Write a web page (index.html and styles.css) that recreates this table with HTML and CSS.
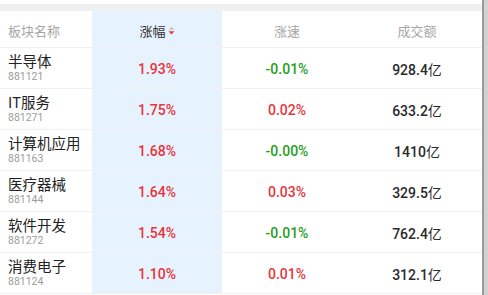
FILE: index.html
```html
<!DOCTYPE html>
<html lang="zh">
<head>
<meta charset="utf-8">
<link rel="stylesheet" href="styles.css">
</head>
<body>
<div class="frame">
  <div class="page">
    <div class="topbar"></div>
    <div class="table">
      <div class="row head">
        <div class="cell name-col"><span class="hd">板块名称</span></div>
        <div class="cell sorted"><span class="hd active">涨幅</span>
          <svg class="sort" width="7" height="9" viewBox="0 0 7 9"><path d="M3.5 0.5 L6.5 3.8 L0.5 3.8 Z" fill="#c8c8c8"/><path d="M0.5 5.2 L6.5 5.2 L3.5 8.5 Z" fill="#e93b3b"/></svg>
        </div>
        <div class="cell"><span class="hd">涨速</span></div>
        <div class="cell"><span class="hd">成交额</span></div>
      </div>
      <div class="row">
        <div class="cell name-col"><div class="nm">半导体</div><div class="code">881121</div></div>
        <div class="cell sorted"><span class="num up">1.93%</span></div>
        <div class="cell"><span class="num down">-0.01%</span></div>
        <div class="cell"><span class="num amt">928.4<span class="yi">亿</span></span></div>
      </div>
      <div class="row">
        <div class="cell name-col"><div class="nm">IT服务</div><div class="code">881271</div></div>
        <div class="cell sorted"><span class="num up">1.75%</span></div>
        <div class="cell"><span class="num up">0.02%</span></div>
        <div class="cell"><span class="num amt">633.2<span class="yi">亿</span></span></div>
      </div>
      <div class="row">
        <div class="cell name-col"><div class="nm">计算机应用</div><div class="code">881163</div></div>
        <div class="cell sorted"><span class="num up">1.68%</span></div>
        <div class="cell"><span class="num down">-0.00%</span></div>
        <div class="cell"><span class="num amt">1410<span class="yi">亿</span></span></div>
      </div>
      <div class="row">
        <div class="cell name-col"><div class="nm">医疗器械</div><div class="code">881144</div></div>
        <div class="cell sorted"><span class="num up">1.64%</span></div>
        <div class="cell"><span class="num up">0.03%</span></div>
        <div class="cell"><span class="num amt">329.5<span class="yi">亿</span></span></div>
      </div>
      <div class="row">
        <div class="cell name-col"><div class="nm">软件开发</div><div class="code">881272</div></div>
        <div class="cell sorted"><span class="num up">1.54%</span></div>
        <div class="cell"><span class="num down">-0.01%</span></div>
        <div class="cell"><span class="num amt">762.4<span class="yi">亿</span></span></div>
      </div>
      <div class="row">
        <div class="cell name-col"><div class="nm">消费电子</div><div class="code">881124</div></div>
        <div class="cell sorted"><span class="num up">1.10%</span></div>
        <div class="cell"><span class="num up">0.01%</span></div>
        <div class="cell"><span class="num amt">312.1<span class="yi">亿</span></span></div>
      </div>
    </div>
  </div>
  <div class="scrollbar"></div>
</div>
</body>
</html>
```
FILE: styles.css
```css
* { box-sizing: border-box; }
html, body { margin: 0; padding: 0; background: #fff; }
body {
  font-family: "Noto Sans CJK SC", "Noto Sans", sans-serif;
  width: 488px;
  height: 295px;
  overflow: hidden;
}
.frame {
  display: flex;
  height: 295px;
}
.page {
  width: 482px;
  padding-top: 4px;
}
.topbar {
  height: 7px;
  background: #f0f0f0;
}
.scrollbar {
  width: 6px;
  border-left: 2px solid #9a9a9a;
  background: #d2d2d2;
}
.row {
  display: grid;
  grid-template-columns: 92px 130px 130px 130px;
  height: 41px;
  border-bottom: 1px solid #f0f0f0;
}
.row.head { height: 37px; }
.cell {
  display: flex;
  align-items: center;
  justify-content: center;
}
.cell.sorted { background: #e6f2fe; }
.name-col {
  flex-direction: column;
  align-items: flex-start;
  justify-content: center;
  padding-left: 8px;
}
.head .cell { padding-top: 3px; }
.hd {
  font-size: 13px;
  color: #a6a6a6;
  line-height: 1;
}
.hd.active { color: #333; }
.sort { margin-left: 2px; }
.nm {
  font-size: 14.5px;
  color: #222;
  line-height: 17px;
  margin-top: -1px;
}
.code {
  font-family: "Roboto", sans-serif;
  font-size: 10.5px;
  color: #9c9c9c;
  line-height: 13px;
  margin-top: 1px;
}
.num {
  font-family: "Roboto", sans-serif;
  font-weight: 500;
  font-size: 14px;
  line-height: 1;
  margin-top: 2px;
}
.up { color: #e8343a; }
.down { color: #1f9e1f; }
.amt { color: #2a2a2a; }
.yi {
  font-family: "Noto Sans CJK SC", sans-serif;
  font-weight: 400;
}
```
